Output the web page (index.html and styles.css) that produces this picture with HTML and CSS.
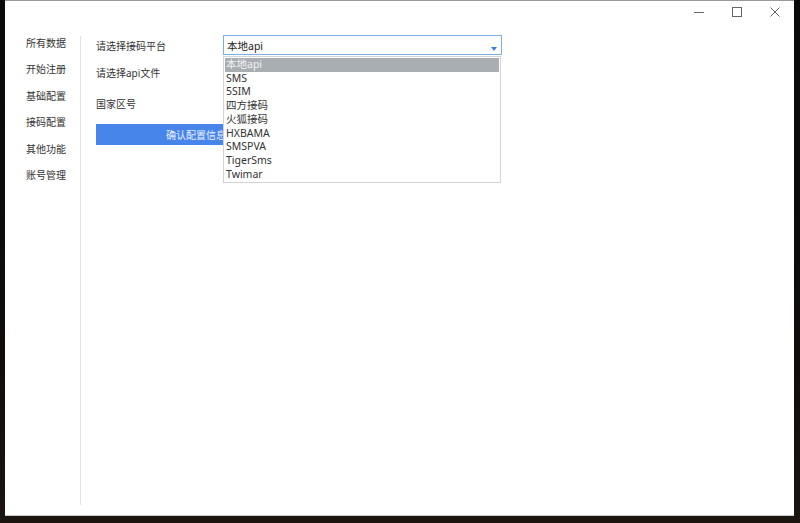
FILE: index.html
```html
<!DOCTYPE html>
<html lang="zh-CN">
<head>
    <meta charset="UTF-8">
    <title>接码配置</title>
    <link rel="stylesheet" href="styles.css">
</head>
<body>
    <div class="window">
        <div class="title-bar">
            <span class="win-btn">
                <svg width="10" height="10" viewBox="0 0 10 10"><path d="M0 5.5h10" stroke="#666" stroke-width="1"/></svg>
            </span>
            <span class="win-btn">
                <svg width="10" height="10" viewBox="0 0 10 10"><rect x="0.5" y="0.5" width="9" height="9" fill="none" stroke="#666" stroke-width="1"/></svg>
            </span>
            <span class="win-btn">
                <svg width="10" height="10" viewBox="0 0 10 10"><path d="M0.5 0.5l9 9M9.5 0.5l-9 9" stroke="#666" stroke-width="1"/></svg>
            </span>
        </div>

        <div class="main">
            <div class="sidebar">
                <div class="nav-item">所有数据</div>
                <div class="nav-item">开始注册</div>
                <div class="nav-item">基础配置</div>
                <div class="nav-item">接码配置</div>
                <div class="nav-item">其他功能</div>
                <div class="nav-item">账号管理</div>
            </div>

            <div class="content">
                <div class="form-row row-platform">
                    <div class="label">请选择接码平台</div>
                    <div class="select-wrap">
                        <div class="select">
                            <span>本地api</span>
                            <span class="arrow"></span>
                        </div>
                        <ul class="dropdown">
                            <li class="active">本地api</li>
                            <li>SMS</li>
                            <li>5SIM</li>
                            <li>四方接码</li>
                            <li>火狐接码</li>
                            <li>HXBAMA</li>
                            <li>SMSPVA</li>
                            <li>TigerSms</li>
                            <li>Twimar</li>
                        </ul>
                    </div>
                </div>
                <div class="form-row row-file">
                    <div class="label">请选择api文件</div>
                </div>
                <div class="form-row row-country">
                    <div class="label">国家区号</div>
                </div>
                <button class="confirm-btn">确认配置信息</button>
            </div>
        </div>
    </div>
</body>
</html>
```

FILE: styles.css
```css
html, body {
    margin: 0;
    height: 100%;
}

body {
    background: linear-gradient(180deg, #0b0a0a 0%, #100d0b 70%, #1c150f 100%);
    font-family: "Noto Sans", "Noto Sans CJK SC", sans-serif;
    font-size: 10px;
    color: #333;
    padding: 0 6px 6px 5px;
    box-sizing: border-box;
}

.window {
    height: 516px;
    background: #fff;
    border-top: 1px solid #9a9a9a;
    border-bottom: 1px solid #c8c8c8;
    box-sizing: border-box;
    display: flex;
    flex-direction: column;
}

.title-bar {
    height: 32px;
    display: flex;
    justify-content: flex-end;
    align-items: flex-start;
    padding-top: 6px;
    box-sizing: border-box;
}

.win-btn {
    width: 38px;
    height: 10px;
    display: flex;
    justify-content: center;
}

.win-btn svg {
    display: block;
}

.main {
    flex: 1;
    display: flex;
    padding-top: 2px;
}

.sidebar {
    width: 76px;
    border-right: 1px solid #e2e2e2;
    margin-top: 1px;
    margin-bottom: 10px;
    padding-left: 21px;
    box-sizing: border-box;
}

.nav-item {
    line-height: 14px;
    margin-bottom: 12.4px;
    color: #333;
}

.content {
    flex: 1;
    padding-left: 15px;
}

.form-row {
    display: flex;
    align-items: center;
}

.label {
    width: 127px;
    color: #333;
}

.row-platform {
    height: 20px;
}

.row-file {
    height: 34px;
}

.row-country {
    height: 28px;
}

.select-wrap {
    position: relative;
}

.select {
    width: 279px;
    height: 20px;
    border: 1px solid #7eaee6;
    box-sizing: border-box;
    padding-left: 3px;
    display: flex;
    align-items: center;
    position: relative;
    color: #222;
    font-size: 10.5px;
}

.arrow {
    position: absolute;
    right: 4px;
    bottom: 3px;
    width: 0;
    height: 0;
    border-left: 3.5px solid transparent;
    border-right: 3.5px solid transparent;
    border-top: 4px solid #3d7fd8;
}

.dropdown {
    position: absolute;
    top: 21px;
    left: 0;
    width: 278px;
    margin: 0;
    padding: 1px;
    list-style: none;
    background: #fff;
    border: 1px solid #d4d4d4;
    box-sizing: border-box;
    z-index: 10;
}

.dropdown li {
    line-height: 13.7px;
    padding-left: 1px;
    color: #333;
    font-size: 10.5px;
}

.dropdown li.active {
    background: #a9aeb3;
    color: #f2f2f2;
}

.confirm-btn {
    display: block;
    margin-top: 7px;
    width: 200px;
    height: 21px;
    background: #4785ea;
    color: #e9f0fc;
    border: none;
    font-family: "Noto Sans", "Noto Sans CJK SC", sans-serif;
    font-size: 10px;
    padding: 0;
}
```
